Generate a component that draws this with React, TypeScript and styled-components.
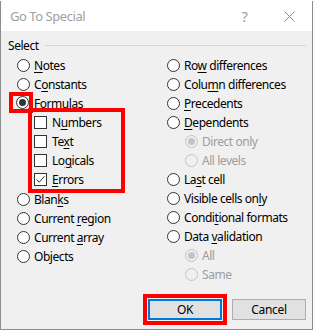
import React from 'react';
import styled, { createGlobalStyle } from 'styled-components';

const GlobalStyle = createGlobalStyle`
  html, body {
    margin: 0;
    padding: 0;
    background: #ffffff;
  }
  body {
    font-family: "Noto Sans", "Open Sans", sans-serif;
  }
`;

type Item = {
  label: string;
  key?: number;
  kind?: 'radio' | 'check';
  checked?: boolean;
  disabled?: boolean;
  indent?: boolean;
};

const leftItems: Item[] = [
  { label: 'Notes', key: 0 },
  { label: 'Constants', key: 1 },
  { label: 'Formulas', checked: true },
  { label: 'Numbers', key: 1, kind: 'check' },
  { label: 'Text', key: 2, kind: 'check' },
  { label: 'Logicals', key: 2, kind: 'check' },
  { label: 'Errors', key: 0, kind: 'check', checked: true },
  { label: 'Blanks', key: 4 },
  { label: 'Current region', key: 8 },
  { label: 'Current array', key: 8 },
  { label: 'Objects', key: 2 },
];

const rightItems: Item[] = [
  { label: 'Row differences', key: 2 },
  { label: 'Column differences', key: 4 },
  { label: 'Precedents', key: 0 },
  { label: 'Dependents', key: 0 },
  { label: 'Direct only', indent: true, disabled: true, checked: true },
  { label: 'All levels', indent: true, disabled: true },
  { label: 'Last cell', key: 2 },
  { label: 'Visible cells only', key: 16 },
  { label: 'Conditional formats', key: 5 },
  { label: 'Data validation', key: 5 },
  { label: 'All', indent: true, disabled: true, checked: true },
  { label: 'Same', indent: true, disabled: true },
];

const Dialog = styled.div`
  width: 311px;
  height: 328px;
  margin-top: 1px;
  border: 1px solid #8c8c8c;
  border-top: none;
  background: #f0f0f0;
  display: flex;
  flex-direction: column;
`;

const TitleBar = styled.div`
  height: 30px;
  background: #ffffff;
  display: flex;
  align-items: center;
  padding-left: 9px;
  font-size: 13px;
  letter-spacing: -0.45px;
  color: #a0a0a0;
`;

const TitleText = styled.div`
  flex: 1;
`;

const TitleButton = styled.div`
  width: 45px;
  height: 30px;
  display: flex;
  align-items: center;
  justify-content: center;
  color: #9b9b9b;
  font-size: 14px;
`;

const Body = styled.div`
  flex: 1;
  display: flex;
  flex-direction: column;
  padding: 7px 6px 0 7px;
  font-size: 12px;
  letter-spacing: -0.45px;
  color: #000;
`;

const GroupHeader = styled.div`
  display: flex;
  align-items: center;
  gap: 6px;
  height: 14px;
`;

const GroupLine = styled.div`
  flex: 1;
  height: 1px;
  background: #d5d5d5;
`;

const Columns = styled.div`
  display: grid;
  grid-template-columns: 150px 1fr;
  padding: 4px 0 0 9px;
`;

const Column = styled.div`
  display: flex;
  flex-direction: column;
  align-items: flex-start;
`;

const Row = styled.div<{ $indent?: boolean; $check?: boolean; $disabled?: boolean }>`
  height: 19px;
  display: flex;
  align-items: center;
  gap: ${(p) => (p.$check ? '5px' : '4px')};
  padding-left: ${(p) => (p.$indent ? '18px' : '0')};
  color: ${(p) => (p.$disabled ? '#9d9d9d' : '#000')};
  white-space: nowrap;
`;

const Radio = styled.span<{ $checked?: boolean; $disabled?: boolean }>`
  position: relative;
  width: 11px;
  height: 11px;
  border-radius: 50%;
  border: 1px solid ${(p) => (p.$disabled ? '#c4c4c4' : '#333')};
  background: ${(p) => (p.$disabled ? '#f0f0f0' : '#fff')};
  flex: none;

  &::after {
    content: '';
    display: ${(p) => (p.$checked ? 'block' : 'none')};
    position: absolute;
    left: 2px;
    top: 2px;
    width: 7px;
    height: 7px;
    border-radius: 50%;
    background: ${(p) => (p.$disabled ? '#c4c4c4' : '#333')};
  }
`;

const Check = styled.span`
  width: 11px;
  height: 11px;
  border: 1px solid #333;
  background: #fff;
  flex: none;
  display: flex;
  align-items: center;
  justify-content: center;
`;

const Label = styled.span`
  u {
    text-decoration: underline;
    text-underline-offset: 2px;
  }
`;

// red annotation frame around the chosen "Formulas" radio
const RadioFrame = styled.div`
  box-sizing: border-box;
  width: 24px;
  height: 21px;
  margin: -2px 0 0 -8px;
  border: 4px solid #ff0000;
  display: flex;
  align-items: center;
  padding-left: 3px;
`;

const FormulasRow = styled.div`
  display: flex;
  align-items: flex-start;
  height: 19px;
  gap: 1px;
`;

const FormulasLabel = styled.span`
  line-height: 19px;
`;

// red annotation frame around the sub-options of "Formulas"
const SubGroup = styled.div`
  box-sizing: border-box;
  width: 97px;
  margin: -5px 0 -3px 11px;
  padding: 1px 0 0 2px;
  border: 4px solid #ff0000;
`;

const OkFrame = styled.div`
  border: 4px solid #ff0000;
  padding: 1px;
  margin: -5px 0 -4px;
  height: 21px;
`;

const Footer = styled.div`
  display: flex;
  justify-content: flex-end;
  align-items: flex-start;
  gap: 5px;
  padding-top: 15px;
`;

const Button = styled.button<{ $default?: boolean }>`
  width: 74px;
  height: 21px;
  box-sizing: border-box;
  background: #e1e1e1;
  border: ${(p) => (p.$default ? '2px solid #0078d7' : '1px solid #adadad')};
  font-family: "Noto Sans", "Open Sans", sans-serif;
  font-size: 12px;
  letter-spacing: -0.3px;
  color: #000;
  padding: 0;
  display: block;
`;

function Text({ item }: { item: Item }) {
  if (item.key === undefined) return <Label>{item.label}</Label>;
  const s = item.label;
  return (
    <Label>
      {s.slice(0, item.key)}
      <u>{s[item.key]}</u>
      {s.slice(item.key + 1)}
    </Label>
  );
}

function Option({ item }: { item: Item }) {
  const isCheck = item.kind === 'check';
  return (
    <Row $indent={item.indent} $check={isCheck} $disabled={item.disabled}>
      {isCheck ? (
        <Check>
          {item.checked && (
            <svg width="9" height="9" viewBox="0 0 9 9">
              <polyline points="0.5,4.5 3.2,7.2 8.5,1.2" fill="none" stroke="#333" strokeWidth="1" />
            </svg>
          )}
        </Check>
      ) : (
        <Radio $checked={item.checked} $disabled={item.disabled} />
      )}
      <Text item={item} />
    </Row>
  );
}

export default function App() {
  return (
    <>
      <GlobalStyle />
      <Dialog>
        <TitleBar>
          <TitleText>Go To Special</TitleText>
          <TitleButton>?</TitleButton>
          <TitleButton>
            <svg width="11" height="11" viewBox="0 0 11 11">
              <path d="M0.5 0.5 L10.5 10.5 M10.5 0.5 L0.5 10.5" stroke="#8a8a8a" strokeWidth="1" />
            </svg>
          </TitleButton>
        </TitleBar>
        <Body>
          <GroupHeader>
            <span>Select</span>
            <GroupLine />
          </GroupHeader>
          <Columns>
            <Column>
              <Option item={leftItems[0]} />
              <Option item={leftItems[1]} />
              <FormulasRow>
                <RadioFrame>
                  <Radio $checked />
                </RadioFrame>
                <FormulasLabel>Formulas</FormulasLabel>
              </FormulasRow>
              <SubGroup>
                {leftItems.slice(3, 7).map((it) => (
                  <Option key={it.label} item={it} />
                ))}
              </SubGroup>
              {leftItems.slice(7).map((it) => (
                <Option key={it.label} item={it} />
              ))}
            </Column>
            <Column>
              {rightItems.map((it) => (
                <Option key={it.label} item={it} />
              ))}
            </Column>
          </Columns>
          <Footer>
            <OkFrame>
              <Button $default>OK</Button>
            </OkFrame>
            <Button>Cancel</Button>
          </Footer>
        </Body>
      </Dialog>
    </>
  );
}
